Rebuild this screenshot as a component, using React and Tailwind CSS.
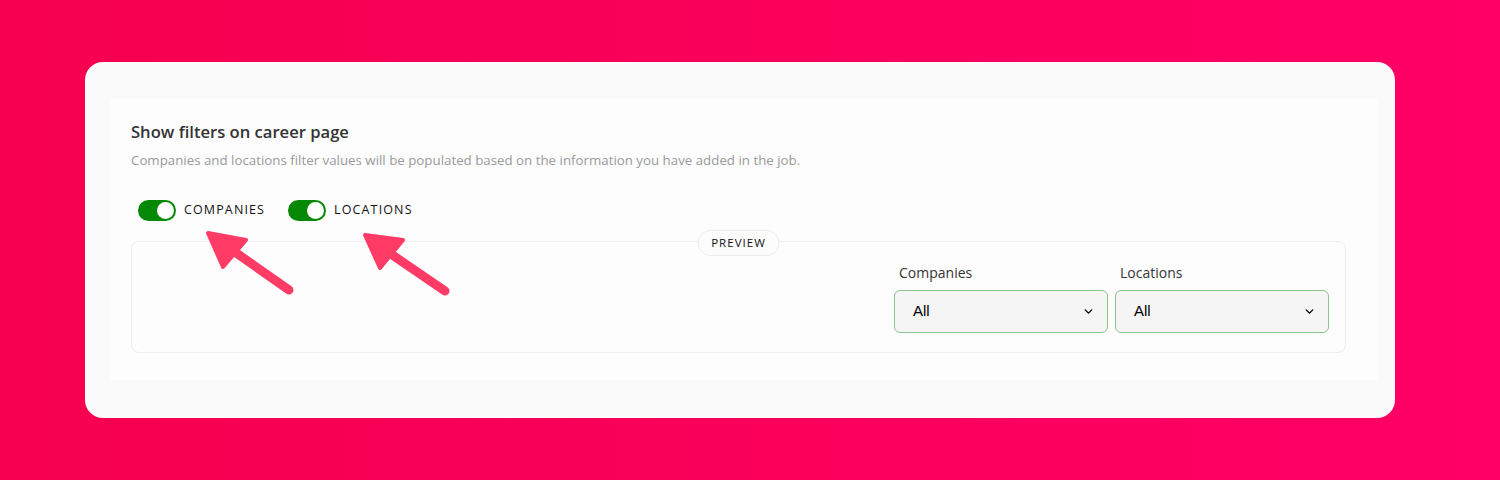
import { ChevronDown } from 'lucide-react'

function Toggle({ label }) {
  return (
    <label className="flex items-center gap-2">
      <span className="flex h-[21px] w-[38px] items-center justify-end rounded-full bg-[#058805] px-[2px]">
        <span className="h-[17px] w-[17px] rounded-full bg-white" />
      </span>
      <span className="text-[12.5px] tracking-[0.09em] text-[#111]">{label}</span>
    </label>
  )
}

function FakeSelect({ label }) {
  return (
    <div className="flex w-[214px] flex-col gap-[7px]">
      <span className="pl-[5px] text-[14px] text-[#333]">{label}</span>
      <div className="flex h-[43px] items-center justify-between rounded-[6px] border border-[#8cc58c] bg-[#f5f5f6] pl-[18px] pr-[12px]">
        <span className="text-[15px] text-black [font-family:'Liberation_Sans',Arial,sans-serif]">All</span>
        <ChevronDown size={13} strokeWidth={2.6} className="text-black" />
      </div>
    </div>
  )
}

// annotation arrows drawn over the toggles
function Arrow({ tip, tail, head }) {
  return (
    <svg className="pointer-events-none absolute left-0 top-0" width="1500" height="480">
      <line x1={tail[0]} y1={tail[1]} x2={head[0]} y2={head[1]} stroke="#ff3b66" strokeWidth="9" strokeLinecap="round" />
      <polygon points={tip.join(' ')} fill="#ff3b66" stroke="#ff3b66" strokeWidth="4" strokeLinejoin="round" />
    </svg>
  )
}

export default function App() {
  return (
    <div className="relative h-[480px] w-[1500px] bg-gradient-to-r from-[#f6004f] to-[#fe0066] pl-[85px] pt-[62px] [font-family:'Open_Sans',sans-serif]">
      <div className="h-[356px] w-[1310px] rounded-[18px] bg-[#fafafa] pl-[25px] pr-[17px] pt-[37px]">
        <div className="flex h-[281px] flex-col bg-[#fdfdfe] pl-[21px] pr-[32px] pt-[22px]">
          <h2 className="text-[16.6px] font-semibold leading-[22px] text-[#333]">Show filters on career page</h2>
          <p className="mt-[8px] text-[13.3px] leading-[18px] text-[#9a9a9a]">
            Companies and locations filter values will be populated based on the information you have added in the job.
          </p>
          <div className="mt-[31px] flex gap-[23px] pl-[7px]">
            <Toggle label="COMPANIES" />
            <Toggle label="LOCATIONS" />
          </div>
          <div className="relative mt-[20px] flex h-[112px] justify-end rounded-[8px] border border-[#eeeeee] pr-[16px] pt-[20px]">
            <span className="absolute left-1/2 top-[-12px] flex h-[26px] -translate-x-1/2 items-center rounded-full border border-[#ececec] bg-[#fcfcfc] px-[13px] text-[11.5px] tracking-[0.09em] text-[#111]">
              PREVIEW
            </span>
            <div className="flex gap-[7px]">
              <FakeSelect label="Companies" />
              <FakeSelect label="Locations" />
            </div>
          </div>
        </div>
      </div>
      <Arrow tip={[208, 233, 246, 240, 223, 267]} head={[232, 250]} tail={[289, 290]} />
      <Arrow tip={[365, 235, 403, 240, 380, 268]} head={[388, 252]} tail={[445, 291]} />
    </div>
  )
}
